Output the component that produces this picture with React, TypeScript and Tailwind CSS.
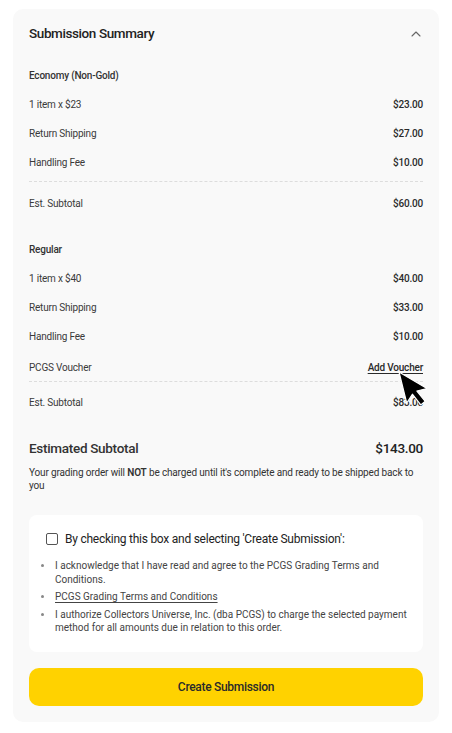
import { ChevronUp } from "lucide-react";

type Row = { label: string; value: string };

const economy: Row[] = [
    { label: "1 item x $23", value: "$23.00" },
    { label: "Return Shipping", value: "$27.00" },
    { label: "Handling Fee", value: "$10.00" },
];

const regular: Row[] = [
    { label: "1 item x $40", value: "$40.00" },
    { label: "Return Shipping", value: "$33.00" },
    { label: "Handling Fee", value: "$10.00" },
];

const LineRow = ({ label, value }: Row) => (
    <div className="flex h-[29px] items-center justify-between">
        <span className="text-[#3a3a3a]">{label}</span>
        <span className="font-medium text-[#2a2a2a]">{value}</span>
    </div>
);

const Dashed = () => <div className="border-t border-dashed border-[#dddddd]" />;

const Cursor = () => (
    <svg
        className="pointer-events-none absolute left-[397px] top-[370px] h-[42px] w-[30px]"
        viewBox="0 0 15 21"
        aria-hidden="true"
    >
        <g transform="rotate(-14 1 1)">
            <path d="M1 1 L1 17 L4.8 13.4 L7.6 19.6 L10.2 18.4 L7.4 12.4 L12.6 12.4 Z" fill="#000" stroke="#fff" strokeWidth="0.6" strokeLinejoin="round" />
        </g>
    </svg>
);

export default function App() {
    return (
        <div
            className="relative min-h-[733px] bg-white px-[13px] pt-[9px] text-[10px] tracking-[-0.2px] text-[#333]"
            style={{ fontFamily: "Roboto, 'Noto Sans', sans-serif" }}
        >
            <div className="rounded-[10px] bg-[#f9f9f9] px-4 pb-4">
                <div className="flex h-[48px] items-center justify-between pt-[1px]">
                    <h2 className="text-[13.5px] font-medium tracking-[-0.4px] text-[#222]">Submission Summary</h2>
                    <ChevronUp className="mr-[-1px] h-[16px] w-[16px] text-[#666]" strokeWidth={1.6} />
                </div>

                <div className="mt-[3px]">
                    <div className="flex h-[30px] items-center font-medium text-[#333]">Economy (Non-Gold)</div>
                    {economy.map((r) => (
                        <LineRow key={r.label} {...r} />
                    ))}
                    <div className="pt-[4px]" />
                    <Dashed />
                    <div className="mt-[7px]">
                        <LineRow label="Est. Subtotal" value="$60.00" />
                    </div>
                </div>

                <div className="mt-[16px]">
                    <div className="flex h-[30px] items-center font-medium text-[#333]">Regular</div>
                    {regular.map((r) => (
                        <LineRow key={r.label} {...r} />
                    ))}
                    <div className="flex h-[30px] items-center justify-between pt-[2px]">
                        <span className="text-[#3a3a3a]">PCGS Voucher</span>
                        <span className="font-medium text-[#2a2a2a] underline underline-offset-2">Add Voucher</span>
                    </div>
                    <Dashed />
                    <div className="mt-[6px]">
                        <LineRow label="Est. Subtotal" value="$83.00" />
                    </div>
                </div>

                <div className="mt-[21px] flex items-center justify-between">
                    <span className="text-[13.5px] font-medium tracking-[-0.3px] text-[#333]">Estimated Subtotal</span>
                    <span className="text-[13.5px] font-medium tracking-[-0.3px] text-[#222]">$143.00</span>
                </div>
                <p className="mt-[8px] leading-[13px] tracking-[-0.15px] text-[#333]">
                    Your grading order will <strong className="font-semibold">NOT</strong> be charged until it's complete and ready to be shipped back to you
                </p>

                <div className="mt-[23px] rounded-[8px] bg-white pl-[17px] pr-[10px] pt-[15px] pb-[17px]">
                    <label className="flex h-[18px] items-center gap-[7px]">
                        <span className="h-[12px] w-[12px] shrink-0 rounded-[2px] border border-[#555] bg-white" />
                        <span className="text-[12px] tracking-[-0.25px] text-[#222]">By checking this box and selecting 'Create Submission':</span>
                    </label>
                    <ul className="mt-[11px] flex list-disc flex-col gap-[4px] pl-[8px] text-[10px] leading-[13.5px] tracking-normal text-[#444] marker:text-[#888]">
                        <li className="pl-[1px]">I acknowledge that I have read and agree to the PCGS Grading Terms and Conditions.</li>
                        <li className="pl-[1px]">
                            <span className="underline underline-offset-2">PCGS Grading Terms and Conditions</span>
                        </li>
                        <li className="pl-[1px]">I authorize Collectors Universe, Inc. (dba PCGS) to charge the selected payment method for all amounts due in relation to this order.</li>
                    </ul>
                </div>

                <button className="mt-[16px] flex h-[38px] w-full items-center justify-center rounded-[10px] bg-[#ffd200] text-[12px] font-medium tracking-[-0.3px] text-[#2a2a2a]">
                    Create Submission
                </button>
            </div>
            <Cursor />
        </div>
    );
}
